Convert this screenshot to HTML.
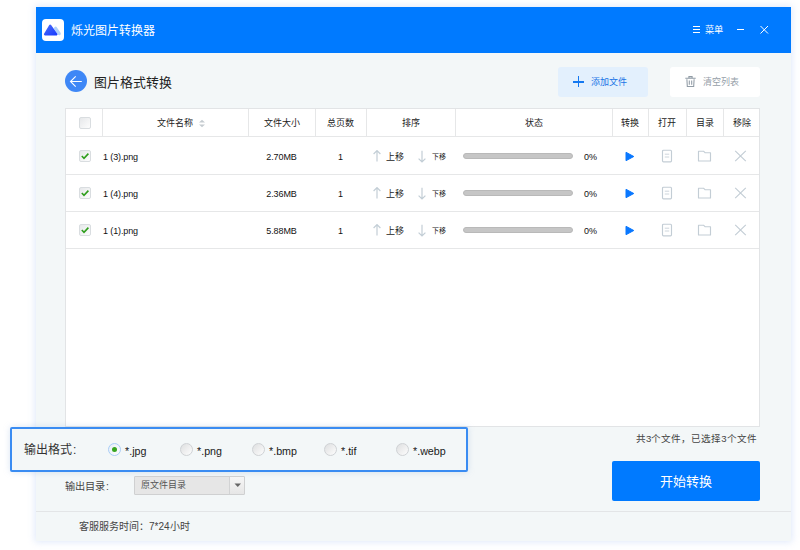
<!DOCTYPE html>
<html lang="zh-CN"><head><meta charset="utf-8">
<style>
*{margin:0;padding:0;box-sizing:border-box}
html,body{width:800px;height:550px;overflow:hidden;background:#fff;font-family:"Liberation Sans",sans-serif;color:#333}
.a{position:absolute;white-space:nowrap}
.t{line-height:1}
.c{text-align:center}
#win{position:absolute;left:36px;top:7px;width:755px;height:534px;background:#f3f7f8;box-shadow:0 0 7px 1px rgba(185,205,245,0.45)}
#hdr{position:absolute;left:36px;top:7px;width:755px;height:46px;background:#007aff}
#tbl{position:absolute;left:65px;top:108px;width:695px;height:319px;background:#fff;border:1px solid #e2e4e6}
.hl{position:absolute;left:0;width:693px;height:1px;background:#e6e7e8}
.vl{position:absolute;top:0;width:1px;height:28px;background:#e6e7e8}
.cb{position:absolute;width:12px;height:12px;border:1px solid #d9dde0;border-radius:2px;background:linear-gradient(135deg,#e6e8ea,#fdfdfd)}
.hd{font-size:9px;color:#222}
.rt{font-size:9px;color:#111;letter-spacing:-0.12px}
.rad{position:absolute;width:13px;height:13px;border-radius:50%;border:1px solid #cfd2d5;background:linear-gradient(135deg,#dedfe0,#fdfdfd)}
.ft{font-size:10.7px;color:#1a1a1a}
</style></head><body>
<div id="win"></div>
<div id="hdr"></div>

<div class="a" style="left:42px;top:19px;width:22px;height:22px;background:#fff;border-radius:4px"></div>
<svg class="a" style="left:42px;top:19px" width="22" height="22" viewBox="0 0 22 22">
  <defs><linearGradient id="lg" x1="0" y1="0" x2="1" y2="1"><stop offset="0" stop-color="#4a6cf7"/><stop offset="1" stop-color="#1a3dff"/></linearGradient></defs>
  <path d="M13.6 9.3 L17.2 14.6" stroke="#b0d1fb" stroke-width="3.2" stroke-linecap="round"/>
  <path d="M8.2 6.6 L14.4 15.3 L3 15.3 Z" fill="url(#lg)" stroke="url(#lg)" stroke-width="2.2" stroke-linejoin="round"/>
</svg>
<div class="a t" style="left:71px;top:24.5px;font-size:12px;color:#fff">烁光图片转换器</div>
<div class="a" style="left:693px;top:26px;width:7px;height:1px;background:#fff"></div>
<div class="a" style="left:693px;top:29px;width:7px;height:1px;background:#fff"></div>
<div class="a" style="left:693px;top:32px;width:7px;height:1px;background:#fff"></div>
<div class="a t" style="left:705px;top:25.8px;font-size:9.2px;color:#fff">菜单</div>
<div class="a" style="left:737px;top:29px;width:7px;height:1px;background:#fff"></div>
<svg class="a" style="left:759px;top:25px" width="10" height="10" viewBox="0 0 10 10"><path d="M1.5 1 L9 8.5 M9 1 L1.5 8.5" stroke="#fff" stroke-width="1"/></svg>

<div class="a" style="left:65px;top:70px;width:22px;height:22px;border-radius:50%;background:#3e87f6"></div>
<svg class="a" style="left:65px;top:70px" width="22" height="22" viewBox="0 0 22 22"><path d="M16.8 11.5 H5.5 M10.7 6.4 L5.5 11.5 L10.7 16.6" fill="none" stroke="#fff" stroke-width="1.1"/></svg>
<div class="a t" style="left:94px;top:76.5px;font-size:12.9px;color:#222;font-weight:500">图片格式转换</div>

<div class="a" style="left:558px;top:67px;width:90px;height:30px;background:#e3f0fd;border-radius:3px"></div>
<div class="a" style="left:573px;top:81px;width:11px;height:1.6px;background:#1478f0"></div>
<div class="a" style="left:577.7px;top:76px;width:1.6px;height:11px;background:#1478f0"></div>
<div class="a t" style="left:591px;top:77.5px;font-size:9px;color:#1a74e6;font-weight:500">添加文件</div>
<div class="a" style="left:670px;top:67px;width:90px;height:30px;background:#fff;border-radius:3px"></div>
<svg class="a" style="left:684px;top:75px" width="13" height="13" viewBox="0 0 13 13"><path d="M1.3 3.3 H11.7 M4.9 3.3 V1.6 H8.1 V3.3 M2.9 4.2 L3.3 11.4 H9.7 L10.1 4.2 M5.3 5.6 V9.8 M7.7 5.6 V9.8" fill="none" stroke="#909ba5" stroke-width="1.05"/></svg>
<div class="a t" style="left:703px;top:77.5px;font-size:9px;color:#96a0a9;font-weight:500">清空列表</div>

<div id="tbl">
<div class="hl" style="top:27px"></div>
<div class="hl" style="top:65px"></div>
<div class="hl" style="top:102px"></div>
<div class="hl" style="top:139px"></div>
<div class="vl" style="left:36px"></div>
<div class="vl" style="left:182px"></div>
<div class="vl" style="left:249px"></div>
<div class="vl" style="left:300px"></div>
<div class="vl" style="left:389px"></div>
<div class="vl" style="left:546px"></div>
<div class="vl" style="left:582px"></div>
<div class="vl" style="left:620px"></div>
<div class="vl" style="left:657px"></div>
</div>
<div class="cb" style="left:79px;top:117px"></div>
<div class="a t hd" style="left:157px;top:119px">文件名称</div>
<svg class="a" style="left:198px;top:119px" width="8" height="9" viewBox="0 0 8 9"><path d="M1 3.6 L4 0.8 L7 3.6 Z M1 5.4 L4 8.2 L7 5.4 Z" fill="#c5cbd0"/></svg>
<div class="a t hd c" style="left:248px;width:67px;top:119px">文件大小</div>
<div class="a t hd c" style="left:315px;width:51px;top:119px">总页数</div>
<div class="a t hd c" style="left:366px;width:89px;top:119px">排序</div>
<div class="a t hd c" style="left:455px;width:157px;top:119px">状态</div>
<div class="a t hd c" style="left:612px;width:36px;top:119px">转换</div>
<div class="a t hd c" style="left:648px;width:38px;top:119px">打开</div>
<div class="a t hd c" style="left:686px;width:37px;top:119px">目录</div>
<div class="a t hd c" style="left:723px;width:37px;top:119px">移除</div>
<div class="cb" style="left:79px;top:149.5px"></div>
<svg class="a" style="left:80px;top:150.5px" width="10" height="10" viewBox="0 0 10 10"><path d="M1.8 5 L4 7.3 L8.4 2.6" fill="none" stroke="#2f9e1c" stroke-width="1.6"/></svg>
<div class="a t rt" style="left:103px;top:152.75px">1 (3).png</div>
<div class="a t rt c" style="left:248px;width:67px;top:152.5px">2.70MB</div>
<div class="a t rt c" style="left:315px;width:51px;top:152.5px">1</div>
<svg class="a" style="left:372px;top:149.5px" width="10" height="12" viewBox="0 0 10 12"><path d="M5 11.6 V0.6 M1.6 4 L5 0.6 L8.4 4" fill="none" stroke="#c3ced6" stroke-width="1.2"/></svg>
<div class="a t" style="left:386px;top:153.0px;font-size:9px;color:#1a1a1a;font-weight:500">上移</div>
<svg class="a" style="left:417px;top:149.5px" width="10" height="13" viewBox="0 0 10 13"><path d="M5 0.8 V12 M1.6 8.6 L5 12 L8.4 8.6" fill="none" stroke="#c3ced6" stroke-width="1.2"/></svg>
<div class="a t" style="left:432px;top:153.0px;font-size:7px;color:#1a1a1a;font-weight:500">下移</div>
<div class="a" style="left:463px;top:152.5px;width:110px;height:6px;border-radius:3px;background:#c6c6c6;border:1px solid #b9b9b9"></div>
<div class="a t rt" style="left:584px;top:152.5px">0%</div>
<svg class="a" style="left:624px;top:150.5px" width="12" height="11" viewBox="0 0 12 11"><path d="M2 1.3 L9.8 5.5 L2 9.7 Z" fill="#0a78ff" stroke="#0a78ff" stroke-width="1" stroke-linejoin="round"/></svg>
<svg class="a" style="left:661px;top:148.5px" width="12" height="14" viewBox="0 0 12 14"><rect x="1.5" y="1.2" width="9" height="11.6" rx="1" fill="none" stroke="#c3cdd5" stroke-width="1.15"/><path d="M3.8 5.2 H8.2 M3.8 8 H8.2" stroke="#c8d1d8" stroke-width="0.9"/></svg>
<svg class="a" style="left:697px;top:149.5px" width="15" height="12" viewBox="0 0 15 12"><path d="M1.5 1.2 H6.5 L8 2.7 H13.5 V11 H1.5 Z" fill="none" stroke="#c3cdd5" stroke-width="1.15" stroke-linejoin="round"/></svg>
<svg class="a" style="left:734px;top:149.5px" width="13" height="12" viewBox="0 0 13 12"><path d="M1.2 0.8 L11.8 11.2 M11.8 0.8 L1.2 11.2" fill="none" stroke="#c3cdd5" stroke-width="1.15"/></svg>
<div class="cb" style="left:79px;top:186.5px"></div>
<svg class="a" style="left:80px;top:187.5px" width="10" height="10" viewBox="0 0 10 10"><path d="M1.8 5 L4 7.3 L8.4 2.6" fill="none" stroke="#2f9e1c" stroke-width="1.6"/></svg>
<div class="a t rt" style="left:103px;top:189.75px">1 (4).png</div>
<div class="a t rt c" style="left:248px;width:67px;top:189.5px">2.36MB</div>
<div class="a t rt c" style="left:315px;width:51px;top:189.5px">1</div>
<svg class="a" style="left:372px;top:186.5px" width="10" height="12" viewBox="0 0 10 12"><path d="M5 11.6 V0.6 M1.6 4 L5 0.6 L8.4 4" fill="none" stroke="#c3ced6" stroke-width="1.2"/></svg>
<div class="a t" style="left:386px;top:190.0px;font-size:9px;color:#1a1a1a;font-weight:500">上移</div>
<svg class="a" style="left:417px;top:186.5px" width="10" height="13" viewBox="0 0 10 13"><path d="M5 0.8 V12 M1.6 8.6 L5 12 L8.4 8.6" fill="none" stroke="#c3ced6" stroke-width="1.2"/></svg>
<div class="a t" style="left:432px;top:190.0px;font-size:7px;color:#1a1a1a;font-weight:500">下移</div>
<div class="a" style="left:463px;top:189.5px;width:110px;height:6px;border-radius:3px;background:#c6c6c6;border:1px solid #b9b9b9"></div>
<div class="a t rt" style="left:584px;top:189.5px">0%</div>
<svg class="a" style="left:624px;top:187.5px" width="12" height="11" viewBox="0 0 12 11"><path d="M2 1.3 L9.8 5.5 L2 9.7 Z" fill="#0a78ff" stroke="#0a78ff" stroke-width="1" stroke-linejoin="round"/></svg>
<svg class="a" style="left:661px;top:185.5px" width="12" height="14" viewBox="0 0 12 14"><rect x="1.5" y="1.2" width="9" height="11.6" rx="1" fill="none" stroke="#c3cdd5" stroke-width="1.15"/><path d="M3.8 5.2 H8.2 M3.8 8 H8.2" stroke="#c8d1d8" stroke-width="0.9"/></svg>
<svg class="a" style="left:697px;top:186.5px" width="15" height="12" viewBox="0 0 15 12"><path d="M1.5 1.2 H6.5 L8 2.7 H13.5 V11 H1.5 Z" fill="none" stroke="#c3cdd5" stroke-width="1.15" stroke-linejoin="round"/></svg>
<svg class="a" style="left:734px;top:186.5px" width="13" height="12" viewBox="0 0 13 12"><path d="M1.2 0.8 L11.8 11.2 M11.8 0.8 L1.2 11.2" fill="none" stroke="#c3cdd5" stroke-width="1.15"/></svg>
<div class="cb" style="left:79px;top:223.5px"></div>
<svg class="a" style="left:80px;top:224.5px" width="10" height="10" viewBox="0 0 10 10"><path d="M1.8 5 L4 7.3 L8.4 2.6" fill="none" stroke="#2f9e1c" stroke-width="1.6"/></svg>
<div class="a t rt" style="left:103px;top:226.75px">1 (1).png</div>
<div class="a t rt c" style="left:248px;width:67px;top:226.5px">5.88MB</div>
<div class="a t rt c" style="left:315px;width:51px;top:226.5px">1</div>
<svg class="a" style="left:372px;top:223.5px" width="10" height="12" viewBox="0 0 10 12"><path d="M5 11.6 V0.6 M1.6 4 L5 0.6 L8.4 4" fill="none" stroke="#c3ced6" stroke-width="1.2"/></svg>
<div class="a t" style="left:386px;top:227.0px;font-size:9px;color:#1a1a1a;font-weight:500">上移</div>
<svg class="a" style="left:417px;top:223.5px" width="10" height="13" viewBox="0 0 10 13"><path d="M5 0.8 V12 M1.6 8.6 L5 12 L8.4 8.6" fill="none" stroke="#c3ced6" stroke-width="1.2"/></svg>
<div class="a t" style="left:432px;top:227.0px;font-size:7px;color:#1a1a1a;font-weight:500">下移</div>
<div class="a" style="left:463px;top:226.5px;width:110px;height:6px;border-radius:3px;background:#c6c6c6;border:1px solid #b9b9b9"></div>
<div class="a t rt" style="left:584px;top:226.5px">0%</div>
<svg class="a" style="left:624px;top:224.5px" width="12" height="11" viewBox="0 0 12 11"><path d="M2 1.3 L9.8 5.5 L2 9.7 Z" fill="#0a78ff" stroke="#0a78ff" stroke-width="1" stroke-linejoin="round"/></svg>
<svg class="a" style="left:661px;top:222.5px" width="12" height="14" viewBox="0 0 12 14"><rect x="1.5" y="1.2" width="9" height="11.6" rx="1" fill="none" stroke="#c3cdd5" stroke-width="1.15"/><path d="M3.8 5.2 H8.2 M3.8 8 H8.2" stroke="#c8d1d8" stroke-width="0.9"/></svg>
<svg class="a" style="left:697px;top:223.5px" width="15" height="12" viewBox="0 0 15 12"><path d="M1.5 1.2 H6.5 L8 2.7 H13.5 V11 H1.5 Z" fill="none" stroke="#c3cdd5" stroke-width="1.15" stroke-linejoin="round"/></svg>
<svg class="a" style="left:734px;top:223.5px" width="13" height="12" viewBox="0 0 13 12"><path d="M1.2 0.8 L11.8 11.2 M11.8 0.8 L1.2 11.2" fill="none" stroke="#c3cdd5" stroke-width="1.15"/></svg>
<div class="a" style="left:10px;top:427px;width:458px;height:45px;border:2px solid #3a8cf2;background:#f3f7f8;border-radius:2px;box-shadow:0 0 6px rgba(150,180,220,0.35)"></div>
<div class="a t" style="left:24px;top:444px;font-size:12px;color:#333">输出格式<span style="margin-left:1px">:</span></div>
<div class="rad" style="left:108px;top:443px;border:1.5px solid #a9cdf6;background:linear-gradient(135deg,#e6eef8,#fdfdfd)"></div>
<div class="a" style="left:112px;top:447px;width:5px;height:5px;border-radius:50%;background:#36a51f"></div>
<div class="a t ft" style="left:125px;top:445.5px">*.jpg</div>
<div class="rad" style="left:180px;top:443px"></div>
<div class="a t ft" style="left:197px;top:445.5px">*.png</div>
<div class="rad" style="left:252px;top:443px"></div>
<div class="a t ft" style="left:269px;top:445.5px">*.bmp</div>
<div class="rad" style="left:324px;top:443px"></div>
<div class="a t ft" style="left:341px;top:445.5px">*.tif</div>
<div class="rad" style="left:396px;top:443px"></div>
<div class="a t ft" style="left:413px;top:445.5px">*.webp</div>
<div class="a t" style="left:65px;top:481.5px;font-size:10.2px;color:#444">输出目录<span style="margin-left:1px">:</span></div>
<div class="a" style="left:134px;top:476px;width:111px;height:19px;border:1px solid #cfd0d1;background:#e6e6e6;border-radius:1px"></div>
<div class="a" style="left:229px;top:477px;width:1px;height:17px;background:#d2d3d4"></div>
<div class="a" style="left:230px;top:477px;width:14px;height:17px;background:linear-gradient(#f6f6f6,#e6e6e6)"></div>
<svg class="a" style="left:233.5px;top:483px" width="8" height="5" viewBox="0 0 8 5"><path d="M0.5 0.5 H7 L3.75 4 Z" fill="#666"/></svg>
<div class="a t" style="left:141px;top:481px;font-size:9px;color:#555">原文件目录</div>
<div class="a t" style="left:636px;top:434px;font-size:9.6px;color:#444">共3个文件，已选择3个文件</div>
<div class="a" style="left:612px;top:461px;width:148px;height:40px;background:#007aff;border-radius:2px"></div>
<div class="a t" style="left:660px;top:474.5px;font-size:13px;color:#fff">开始转换</div>
<div class="a" style="left:36px;top:511px;width:755px;height:1px;background:#e3e5e7"></div>
<div class="a t" style="left:79px;top:522px;font-size:10px;color:#444">客服服务时间：7*24小时</div>
</body></html>
